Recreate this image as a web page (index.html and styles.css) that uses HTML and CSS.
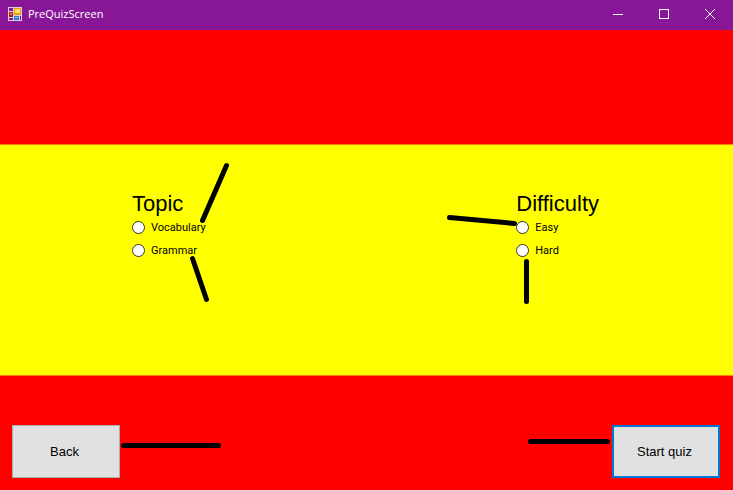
FILE: index.html
```html
<!DOCTYPE html>
<html lang="en">
<head>
<meta charset="utf-8">
<title>PreQuizScreen</title>
<link rel="stylesheet" href="styles.css">
</head>
<body>
<header class="titlebar">
  <svg class="app-icon" width="14" height="14" viewBox="0 0 14 14" shape-rendering="crispEdges" aria-hidden="true">
    <rect width="14" height="14" fill="#d8cfdc"/>
    <rect x="1" y="1" width="4" height="3" fill="#881798"/>
    <rect x="1" y="5" width="4" height="5" fill="#b81c10"/>
    <rect x="2" y="6" width="2" height="2" fill="#ee6a50"/>
    <rect x="1" y="11" width="4" height="2" fill="#881798"/>
    <rect x="6" y="1" width="7" height="7" fill="#e0a010"/>
    <rect x="7" y="2" width="5" height="4" fill="#ffdc60"/>
    <rect x="6" y="9" width="5" height="4" fill="#3478dc"/>
    <rect x="7" y="10" width="3" height="1" fill="#8cc0ff"/>
    <rect x="12" y="9" width="1" height="4" fill="#881798"/>
  </svg>
  <h1 class="title">PreQuizScreen</h1>
  <div class="window-buttons">
    <button class="window-button" type="button" aria-label="Minimize"><svg width="10" height="10" viewBox="0 0 10 10" shape-rendering="crispEdges"><path d="M0 5.500H10"/></svg></button>
    <button class="window-button" type="button" aria-label="Maximize"><svg width="10" height="10" viewBox="0 0 10 10" shape-rendering="crispEdges"><path d="M.5 .5H9.500V9.500H.5Z"/></svg></button>
    <button class="window-button" type="button" aria-label="Close"><svg width="10" height="10" viewBox="0 0 10 10"><path d="M0 0L10 10M10 0L0 10"/></svg></button>
  </div>
</header>
<main class="screen">
  <form class="quiz-form">
    <div class="choices">
      <fieldset class="group">
        <legend class="heading">Topic</legend>
        <label class="option"><input type="radio" name="topic">Vocabulary</label>
        <label class="option"><input type="radio" name="topic">Grammar</label>
        <svg class="pointer pointer-topic" width="110" height="150" viewBox="0 0 110 150" aria-hidden="true"><path d="M94.500 10.500L70.500 65.500M60.500 103.500L74.500 144.500"/></svg>
      </fieldset>
      <fieldset class="group">
        <legend class="heading">Difficulty</legend>
        <label class="option"><input type="radio" name="difficulty">Easy</label>
        <label class="option"><input type="radio" name="difficulty">Hard</label>
        <svg class="pointer pointer-difficulty" width="90" height="100" viewBox="0 0 90 100" aria-hidden="true"><path d="M5.500 8.500L70.500 14.500M82.500 52.500V92.500"/></svg>
      </fieldset>
    </div>
    <div class="actions">
      <div class="action">
        <button class="button" type="button">Back</button>
        <svg class="pointer pointer-back" width="100" height="5" viewBox="0 0 100 5" aria-hidden="true"><path d="M2.500 2.500H97.500"/></svg>
      </div>
      <div class="action">
        <button class="button button-default" type="submit">Start quiz</button>
        <svg class="pointer pointer-start" width="84" height="5" viewBox="0 0 84 5" aria-hidden="true"><path d="M3.500 2.500H80.500"/></svg>
      </div>
    </div>
  </form>
</main>
</body>
</html>
```
FILE: styles.css
```css
* { box-sizing: border-box; }

body {
  margin: 0;
  min-height: 100vh;
  display: flex;
  flex-direction: column;
  font-family: "Liberation Sans", Arial, sans-serif;
  color: #000;
}

.titlebar {
  display: flex;
  align-items: center;
  height: 30px;
  padding: 0 0 2px 8px;
  background: #881798;
  color: #fff;
}

.title {
  flex: 1;
  margin: 0 0 0 6px;
  font: 400 11px/16px "Open Sans", sans-serif;
}

.window-buttons { display: flex; }

.window-button {
  display: flex;
  align-items: center;
  justify-content: center;
  width: 46px;
  height: 28px;
  padding: 0;
  border: 0;
  background: none;
}

.window-button path {
  fill: none;
  stroke: #fff;
}

.screen {
  flex: 1;
  display: flex;
  background: linear-gradient(#f00 calc(25% - 1px), #ff0 25%, #ff0 75%, #f00 calc(75% + 1px));
}

.quiz-form {
  flex: 1;
  display: flex;
  flex-direction: column;
  justify-content: space-between;
}

.choices {
  display: flex;
  justify-content: space-between;
  padding: 162px 134px 0 132px;
}

.group {
  position: relative;
  margin: 0;
  padding: 0;
  border: 0;
  min-width: 0;
}

.heading {
  padding: 0;
  font-size: 22px;
  line-height: 24px;
}

.option {
  display: flex;
  align-items: center;
  gap: 6px;
  height: 23px;
  font: 11px/16px Roboto, sans-serif;
}

.option input {
  appearance: none;
  width: 13px;
  height: 13px;
  margin: 0;
  border: 1px solid #333;
  border-radius: 50%;
  background: #fff;
}

.option input:checked { background: radial-gradient(#333 3px, #fff 4px); }

.actions {
  display: flex;
  justify-content: space-between;
  padding: 0 13px 12px 12px;
}

.action { position: relative; }

.button {
  display: block;
  width: 108px;
  height: 53px;
  padding: 0 3px 0 0;
  border: 1px solid #adadad;
  border-radius: 0;
  background: #e1e1e1;
  color: #000;
  font: 13px/16px "Liberation Sans", Arial, sans-serif;
}

.button-default { border: 2px solid #0078d7; }

.pointer {
  position: absolute;
  pointer-events: none;
}

.pointer path {
  fill: none;
  stroke: #000;
  stroke-width: 5px;
  stroke-linecap: round;
}

.pointer-topic { left: 0; top: -61px; }
.pointer-difficulty { right: 65px; top: -7px; }
.pointer-back { left: 109px; top: 18px; }
.pointer-start { right: 109px; top: 14px; }
```
